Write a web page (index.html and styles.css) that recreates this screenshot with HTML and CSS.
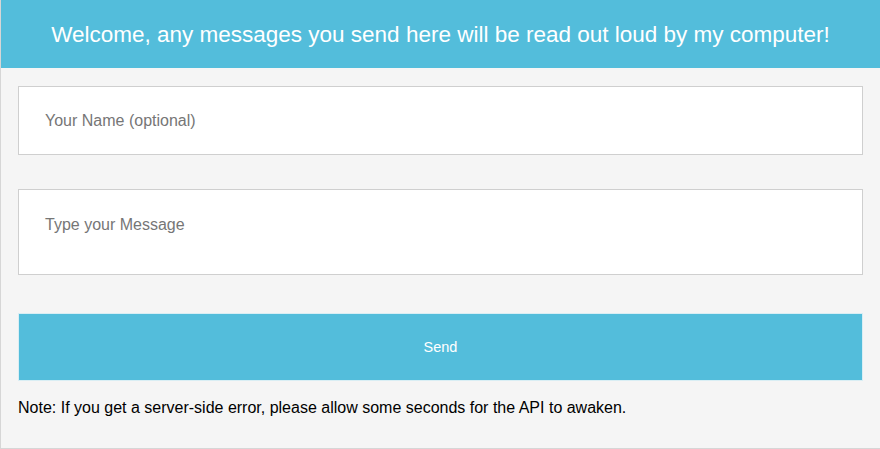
FILE: index.html
```html
<!DOCTYPE html>
<html>
<head>
<meta charset="utf-8">
<link rel="stylesheet" href="styles.css">
</head>
<body>
<div class="page">
  <header class="banner">Welcome, any messages you send here will be read out loud by my computer!</header>
  <main class="content">
    <input class="field name" type="text" placeholder="Your Name (optional)">
    <textarea class="field message" placeholder="Type your Message"></textarea>
    <button class="send">Send</button>
    <p class="note">Note: If you get a server-side error, please allow some seconds for the API to awaken.</p>
  </main>
</div>
</body>
</html>
```
FILE: styles.css
```css
html, body {
  margin: 0;
  padding: 0;
  background: #ffffff;
}
body {
  font-family: "Liberation Sans", Arial, sans-serif;
}
.page {
  width: 890px;
  height: 448px;
  background: #f5f5f5;
  border-left: 1px solid #d6d6d6;
  border-bottom: 1px solid #d6d6d6;
  box-sizing: content-box;
}
.banner {
  height: 68px;
  background: #53bddb;
  color: #ffffff;
  font-size: 22.5px;
  display: flex;
  align-items: center;
  justify-content: center;
  width: 879px;
  padding-top: 2px;
  box-sizing: border-box;
}
.content {
  padding: 18px 0 0 17px;
  display: flex;
  flex-direction: column;
  width: 845px;
}
.field {
  display: block;
  width: 845px;
  box-sizing: border-box;
  border: 1px solid #cfcfcf;
  background: #ffffff;
  font-family: "Liberation Sans", Arial, sans-serif;
  font-size: 16px;
  color: #333;
  padding: 0 26px;
  margin: 0;
  outline: none;
}
.field::placeholder {
  color: #767676;
}
.name {
  height: 69px;
}
.message {
  height: 86px;
  margin-top: 34px;
  padding-top: 26px;
  resize: none;
}
.send {
  margin-top: 38px;
  height: 68px;
  width: 845px;
  border: 1px solid #d9eef4;
  background: #53bddb;
  color: #ffffff;
  font-family: "Liberation Sans", Arial, sans-serif;
  font-size: 14.5px;
}
.note {
  margin: 18px 0 0 0;
  font-size: 16px;
  color: #000;
}
```
